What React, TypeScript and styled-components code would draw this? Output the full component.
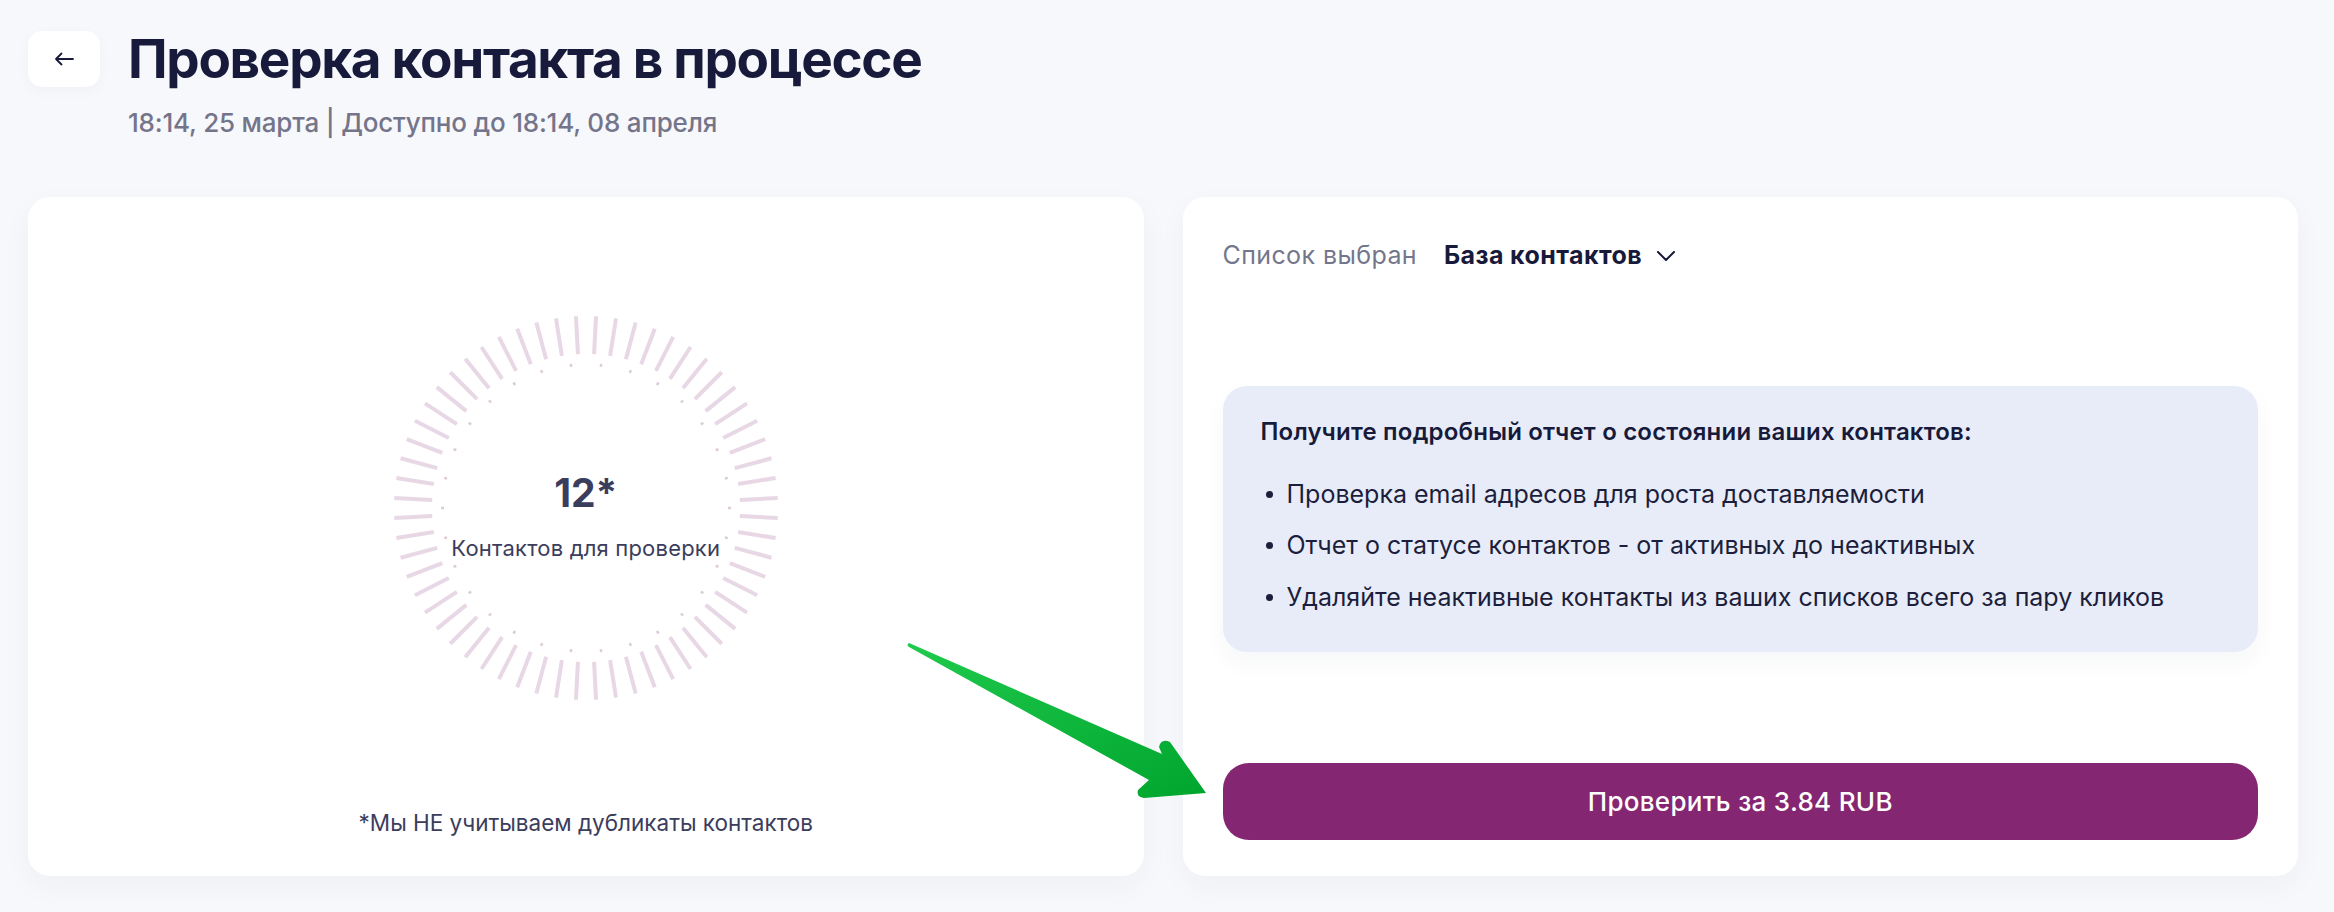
import React from 'react'
import styled, { createGlobalStyle } from 'styled-components'

const GlobalStyle = createGlobalStyle`
  * { box-sizing: border-box; }
  body {
    margin: 0;
    background: #f7f8fb;
    font-family: Inter, 'Noto Sans', 'Liberation Sans', sans-serif;
    color: #171a3a;
  }
`

const Page = styled.div`
  position: relative;
  min-height: 100vh;
  display: flex;
  flex-direction: column;
  padding: 28px 36px 36px 28px;
`

const Header = styled.header`
  display: flex;
  align-items: flex-start;
  gap: 28px;
`

const BackButton = styled.button`
  margin-top: 3px;
  width: 72px;
  height: 56px;
  border: none;
  border-radius: 14px;
  background: #fff;
  display: flex;
  align-items: center;
  justify-content: center;
  color: #171a3a;
  box-shadow: 0 4px 14px rgba(30, 40, 80, 0.03);
  cursor: pointer;
`

const TitleBlock = styled.div`
  display: flex;
  flex-direction: column;
  gap: 15px;
`

const Title = styled.h1`
  margin: 0;
  font-size: 53px;
  line-height: 62px;
  font-weight: 700;
  letter-spacing: -1.3px;
  color: #171a3a;
`

const Subtitle = styled.div`
  font-size: 26px;
  line-height: 1.4;
  font-weight: 500;
  letter-spacing: -0.2px;
  color: #74758a;
`

const Cards = styled.main`
  flex: 1;
  margin-top: 56px;
  display: grid;
  grid-template-columns: 1fr 1fr;
  gap: 39px;
`

const Card = styled.section`
  background: #fff;
  border-radius: 22px;
  padding: 40px 40px 36px;
  display: flex;
  flex-direction: column;
  box-shadow: 0 10px 30px rgba(30, 40, 80, 0.04);
`

const ChartArea = styled.div`
  flex: 1;
  display: flex;
  align-items: center;
  justify-content: center;
  padding-bottom: 28px;
`

const Dial = styled.div`
  position: relative;
  width: 400px;
  height: 400px;
`

const DialLabel = styled.div`
  position: absolute;
  inset: 0;
  padding-top: 18px;
  display: flex;
  flex-direction: column;
  align-items: center;
  justify-content: center;
  gap: 16px;
  color: #3b3d5c;
`

const Count = styled.div`
  font-size: 39px;
  line-height: 1.2;
  font-weight: 700;
`

const CountCaption = styled.div`
  font-size: 22px;
  line-height: 1.4;
  letter-spacing: 0.2px;
`

const Footnote = styled.p`
  margin: 0;
  text-align: center;
  font-size: 22.5px;
  line-height: 1.5;
  color: #3b3d5c;
`

const SidePanel = styled(Card)`
  justify-content: space-between;
`

const ListPicker = styled.div`
  display: flex;
  align-items: center;
  font-size: 25px;
  line-height: 1.5;
  letter-spacing: 0.4px;
`

const PickerLabel = styled.span`
  color: #74768b;
`

const PickerValue = styled.button`
  margin-left: 27px;
  padding: 0;
  border: none;
  background: none;
  display: flex;
  align-items: center;
  gap: 15px;
  font: inherit;
  font-weight: 700;
  letter-spacing: inherit;
  color: #171a3a;
  cursor: pointer;
`

const InfoBox = styled.div`
  background: #e7ecf8;
  border-radius: 24px;
  padding: 28px 38px 36px;
  box-shadow: 0 12px 24px rgba(30, 40, 80, 0.04);
`

const InfoTitle = styled.h3`
  margin: 0 0 26px;
  font-size: 24px;
  line-height: 1.5;
  font-weight: 600;
  letter-spacing: 0.2px;
  color: #171a3a;
`

const Features = styled.ul`
  margin: 0;
  padding: 0;
  list-style: none;
  display: flex;
  flex-direction: column;
  gap: 14px;
`

const Feature = styled.li`
  display: flex;
  align-items: center;
  font-size: 25px;
  line-height: 1.5;
  color: #1c1e3c;

  &::before {
    content: '';
    flex: none;
    width: 7px;
    height: 7px;
    margin: 0 14px 0 5px;
    border-radius: 50%;
    background: currentColor;
  }
`

const PayButton = styled.button`
  height: 77px;
  border: none;
  border-radius: 26px;
  background: #842671;
  color: #fff;
  font-family: inherit;
  font-size: 26px;
  font-weight: 500;
  letter-spacing: 0.3px;
  cursor: pointer;
`

const Pointer = styled.svg`
  position: absolute;
  left: 900px;
  top: 630px;
  pointer-events: none;
`

const TICKS = Array.from({ length: 60 }, (_, i) => 3 + i * 6)
const DOTS = Array.from({ length: 30 }, (_, i) => 6 + i * 12)

const polar = (deg: number, r: number) => {
  const a = (deg * Math.PI) / 180
  return [200 + r * Math.sin(a), 200 - r * Math.cos(a)]
}

const DialChart: React.FC = () => (
  <svg width="400" height="400" viewBox="0 0 400 400">
    {TICKS.map((deg) => {
      const [x1, y1] = polar(deg, 154)
      const [x2, y2] = polar(deg, 192)
      return (
        <line
          key={deg}
          x1={x1}
          y1={y1}
          x2={x2}
          y2={y2}
          stroke="#e8d8e6"
          strokeWidth="4"
        />
      )
    })}
    {DOTS.map((deg) => {
      const [x1, y1] = polar(deg, 142)
      const [x2, y2] = polar(deg, 145)
      return (
        <line
          key={deg}
          x1={x1}
          y1={y1}
          x2={x2}
          y2={y2}
          stroke="#ddcbda"
          strokeWidth="2.5"
        />
      )
    })}
  </svg>
)

const App: React.FC = () => (
  <>
    <GlobalStyle />
    <Page>
      <Header>
        <BackButton aria-label="Назад">
          <svg width="20" height="14" viewBox="0 0 20 14" fill="none">
            <path
              d="M19 7H2M7.5 1.5L2 7l5.5 5.5"
              stroke="currentColor"
              strokeWidth="1.8"
              strokeLinecap="round"
              strokeLinejoin="round"
            />
          </svg>
        </BackButton>
        <TitleBlock>
          <Title>Проверка контакта в процессе</Title>
          <Subtitle>18:14, 25 марта | Доступно до 18:14, 08 апреля</Subtitle>
        </TitleBlock>
      </Header>

      <Cards>
        <Card>
          <ChartArea>
            <Dial>
              <DialChart />
              <DialLabel>
                <Count>12*</Count>
                <CountCaption>Контактов для проверки</CountCaption>
              </DialLabel>
            </Dial>
          </ChartArea>
          <Footnote>*Мы НЕ учитываем дубликаты контактов</Footnote>
        </Card>

        <SidePanel>
          <ListPicker>
            <PickerLabel>Список выбран</PickerLabel>
            <PickerValue>
              База контактов
              <svg width="18" height="10" viewBox="0 0 18 10" fill="none">
                <path
                  d="M1 1l8 8 8-8"
                  stroke="currentColor"
                  strokeWidth="2"
                  strokeLinecap="round"
                  strokeLinejoin="round"
                />
              </svg>
            </PickerValue>
          </ListPicker>

          <InfoBox>
            <InfoTitle>Получите подробный отчет о состоянии ваших контактов:</InfoTitle>
            <Features>
              <Feature>Проверка email адресов для роста доставляемости</Feature>
              <Feature>Отчет о статусе контактов - от активных до неактивных</Feature>
              <Feature>Удаляйте неактивные контакты из ваших списков всего за пару кликов</Feature>
            </Features>
          </InfoBox>

          <PayButton>Проверить за 3.84 RUB</PayButton>
        </SidePanel>
      </Cards>

      <Pointer width="320" height="190" viewBox="0 0 320 190">
        <defs>
          <linearGradient id="arrowFill" x1="0" y1="0" x2="1" y2="1">
            <stop offset="0" stopColor="#1fca4c" />
            <stop offset="1" stopColor="#00a52e" />
          </linearGradient>
        </defs>
        <path
          d="M9 13 L262 124 L259 117 Q261 108 270 112 L306 163 L244 168 Q236 167 238 160 L249 150 L9 17 Q6 15 9 13 Z"
          fill="url(#arrowFill)"
        />
      </Pointer>
    </Page>
  </>
)

export default App
